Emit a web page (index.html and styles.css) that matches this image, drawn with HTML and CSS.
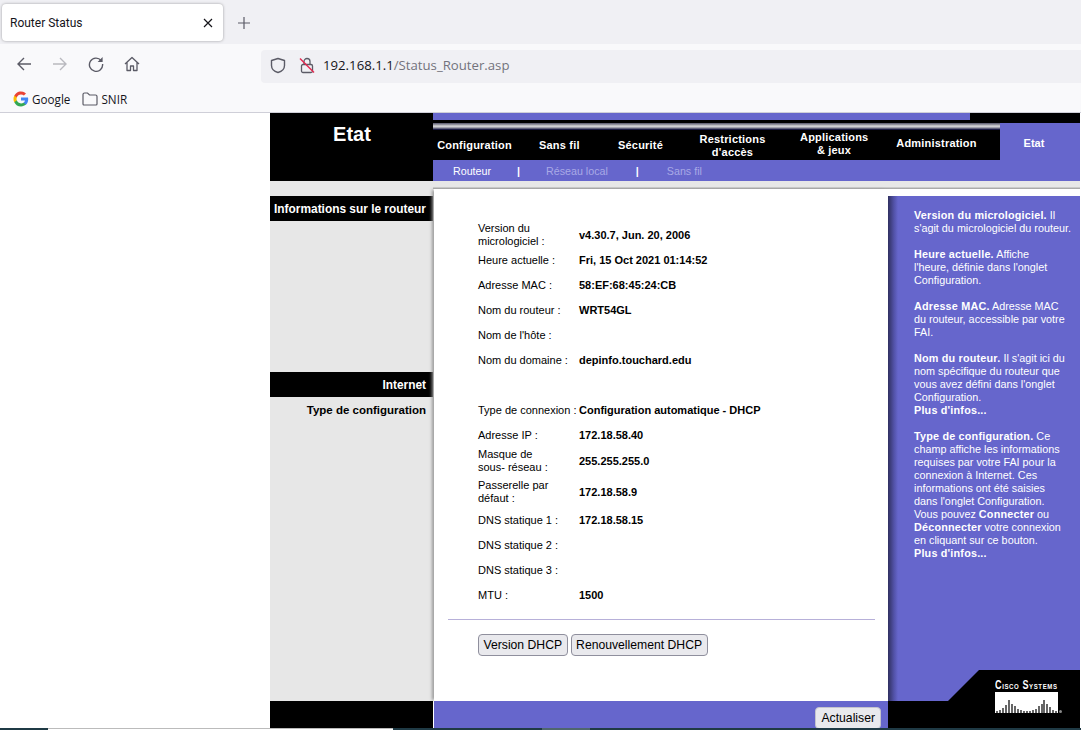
FILE: index.html
```html
<!DOCTYPE html>
<html lang="fr">
<head>
  <meta charset="UTF-8">
  <title>Router Status</title>
  <link rel="stylesheet" href="styles.css">
</head>
<body>

<!-- browser chrome -->
<div class="tabstrip">
  <div class="tab">
    <span class="tab-title">Router Status</span>
    <svg class="tab-close" width="10" height="10" viewBox="0 0 10 10"><path d="M1 1l8 8M9 1l-8 8" stroke="#15141a" stroke-width="1.2" fill="none"/></svg>
  </div>
  <svg class="tab-new" width="12" height="12" viewBox="0 0 12 12"><path d="M6 0v12M0 6h12" stroke="#5b5b66" stroke-width="1.2" fill="none"/></svg>
</div>

<div class="toolbar">
  <div class="nav-icons">
    <svg width="16" height="16" viewBox="0 0 16 16"><path d="M15 8H2M8 2L2 8l6 6" stroke="#5b5b66" stroke-width="1.4" fill="none"/></svg>
    <svg width="16" height="16" viewBox="0 0 16 16"><path d="M1 8h13M8 2l6 6-6 6" stroke="#b9b9bf" stroke-width="1.4" fill="none"/></svg>
    <svg width="16" height="16" viewBox="0 0 16 16"><path d="M13.2 4.6A6.6 6.6 0 1 0 14.6 8" stroke="#5b5b66" stroke-width="1.4" fill="none"/><path d="M14.6 1v5h-5z" fill="#5b5b66"/></svg>
    <svg width="16" height="16" viewBox="0 0 16 16"><path d="M1 8l7-6.5L15 8M3 6.5V14.500h3.500V10h3v4.500H13V6.500" stroke="#5b5b66" stroke-width="1.3" fill="none" stroke-linejoin="round"/></svg>
  </div>
  <div class="urlbar">
    <svg width="16" height="17" viewBox="0 0 16 17"><path d="M8 1.500l6.500 2v5c0 3.500-3 6-6.500 7-3.500-1-6.500-3.500-6.500-7v-5z" stroke="#5b5b66" stroke-width="1.4" fill="none" stroke-linejoin="round"/></svg>
    <svg class="lock" width="16" height="17" viewBox="0 0 16 17"><path d="M5 7V4.500a3 3 0 0 1 6 0V7" stroke="#5b5b66" stroke-width="1.3" fill="none"/><rect x="2.500" y="7.500" width="11" height="8" rx="1.500" stroke="#5b5b66" stroke-width="1.3" fill="none"/><path d="M1 1.500l14 14" stroke="#e22850" stroke-width="1.4"/></svg>
    <span class="url"><span class="url-host">192.168.1.1</span>/Status_Router.asp</span>
  </div>
</div>

<div class="bookmarks">
  <span class="bookmark">
    <svg width="16" height="16" viewBox="0 0 16 16">
      <path d="M15.200 8.200c0-.6-.1-1.100-.2-1.600H8v3h4a3.400 3.400 0 0 1-1.500 2.200v1.900h2.400c1.400-1.300 2.300-3.200 2.300-5.500z" fill="#4285f4"/>
      <path d="M8 15.400c2 0 3.700-.7 4.900-1.800l-2.400-1.900c-.7.400-1.500.7-2.500.7-1.900 0-3.600-1.300-4.200-3.100H1.300v1.900A7.400 7.400 0 0 0 8 15.400z" fill="#34a853"/>
      <path d="M3.800 9.300a4.400 4.400 0 0 1 0-2.800V4.600H1.300a7.400 7.400 0 0 0 0 6.600z" fill="#fbbc05"/>
      <path d="M8 3.500c1.100 0 2.100.4 2.900 1.100L13 2.500A7.400 7.400 0 0 0 1.300 4.600l2.500 1.900C4.400 4.800 6.100 3.500 8 3.500z" fill="#ea4335"/>
    </svg>
    Google
  </span>
  <span class="bookmark">
    <svg width="16" height="16" viewBox="0 0 16 16"><path d="M1 13V3.500A1.500 1.500 0 0 1 2.500 2h3l2 2h6A1.500 1.500 0 0 1 15 5.500V13a1 1 0 0 1-1 1H2a1 1 0 0 1-1-1z" stroke="#5b5b66" stroke-width="1.200" fill="none"/></svg>
    SNIR
  </span>
</div>

<!-- router page -->
<div class="page">
  <div class="head-left">Etat</div>
  <div class="head-right">
    <div class="top-band"><div class="top-purple"></div></div>
    <div class="nav-row">
      <div class="nav">
        <div class="nav-rule"></div>
        <div class="nav-items">
          <span class="nav-item nav-config">Configuration</span>
          <span class="nav-item nav-wifi">Sans fil</span>
          <span class="nav-item nav-sec">Sécurité</span>
          <span class="nav-item nav-restr">Restrictions<br>d'accès</span>
          <span class="nav-item nav-apps">Applications<br>&amp; jeux</span>
          <span class="nav-item nav-admin">Administration</span>
        </div>
      </div>
      <div class="nav-active">Etat</div>
    </div>
    <div class="subnav">
      <span class="sub-link sub-current">Routeur</span>
      <span class="sub-sep">|</span>
      <span class="sub-link">Réseau local</span>
      <span class="sub-sep sub-sep-wide">|</span>
      <span class="sub-link">Sans fil</span>
    </div>
  </div>

  <div class="side">
    <div class="side-title">Informations sur le routeur</div>
    <div class="side-title side-internet">Internet</div>
    <div class="side-label">Type de configuration</div>
  </div>

  <div class="main">
    <div class="band"></div>
    <div class="main-inner">
      <div class="rows">
        <div class="row row-first"><span class="lbl">Version du micrologiciel :</span><b>v4.30.7, Jun. 20, 2006</b></div>
        <div class="row"><span class="lbl">Heure actuelle :</span><b>Fri, 15 Oct 2021 01:14:52</b></div>
        <div class="row"><span class="lbl">Adresse MAC :</span><b>58:EF:68:45:24:CB</b></div>
        <div class="row"><span class="lbl">Nom du routeur :</span><b>WRT54GL</b></div>
        <div class="row"><span class="lbl">Nom de l'hôte :</span></div>
        <div class="row"><span class="lbl">Nom du domaine :</span><b>depinfo.touchard.edu</b></div>
        <div class="row row-gap"><span class="lbl">Type de connexion :</span><b>Configuration automatique - DHCP</b></div>
        <div class="row"><span class="lbl">Adresse IP :</span><b>172.18.58.40</b></div>
        <div class="row row-mask"><span class="lbl">Masque de<br>sous- réseau :</span><b>255.255.255.0</b></div>
        <div class="row row-gw"><span class="lbl">Passerelle par défaut :</span><b>172.18.58.9</b></div>
        <div class="row row-dns"><span class="lbl">DNS statique 1 :</span><b>172.18.58.15</b></div>
        <div class="row"><span class="lbl">DNS statique 2 :</span></div>
        <div class="row"><span class="lbl">DNS statique 3 :</span></div>
        <div class="row"><span class="lbl">MTU :</span><b>1500</b></div>
      </div>
      <div class="rule"></div>
      <div class="actions">
        <button class="btn">Version DHCP</button>
        <button class="btn">Renouvellement DHCP</button>
      </div>
    </div>
  </div>

  <div class="help">
    <div class="band"></div>
    <div class="help-text">
      <p><b>Version du micrologiciel.</b> Il<br>s'agit du micrologiciel du routeur.</p>
      <p><b>Heure actuelle.</b> Affiche<br>l'heure, définie dans l'onglet<br>Configuration.</p>
      <p><b>Adresse MAC.</b> Adresse MAC<br>du routeur, accessible par votre<br>FAI.</p>
      <p><b>Nom du routeur.</b> Il s'agit ici du<br>nom spécifique du routeur que<br>vous avez défini dans l'onglet<br>Configuration.<br><b>Plus d'infos...</b></p>
      <p><b>Type de configuration.</b> Ce<br>champ affiche les informations<br>requises par votre FAI pour la<br>connexion à Internet. Ces<br>informations ont été saisies<br>dans l'onglet Configuration.<br>Vous pouvez <b>Connecter</b> ou<br><b>Déconnecter</b> votre connexion<br>en cliquant sur ce bouton.<br><b>Plus d'infos...</b></p>
    </div>
  </div>

  <div class="foot-left"></div>
  <div class="foot-main"><button class="btn btn-foot">Actualiser</button></div>
  <div class="foot-right"></div>

  <div class="logo">
    <svg class="logo-notch" width="132" height="31" viewBox="0 0 132 31"><path d="M0 31L31 0h101v31z" fill="#000"/></svg>
    <div class="logo-word">Cisco Systems</div>
    <svg class="logo-bars" width="68" height="22" viewBox="0 0 68 22">
      <rect width="63" height="21" fill="#fff"/>
      <path d="M2 21v-2M5 21v-3M8 21v-5M11 21v-8M14 21v-13M17 21v-9M20 21v-7M23 21v-4M26 21v-3M29 21v-2M32 21v-2M35 21v-2M38 21v-3M41 21v-4M44 21v-7M47 21v-9M49 21v-13M52 21v-9M55 21v-6M58 21v-3M61 21v-2" stroke="#000" stroke-width="1.200"/>
      <circle cx="65.500" cy="19.500" r="1.500" fill="#888"/>
    </svg>
  </div>
</div>

<div class="taskbar"><span class="task-dark task-start"></span><span class="task-light"></span><span class="task-dark task-mid"></span><span class="task-hi"></span><span class="task-dark task-end"></span></div>

</body>
</html>
```

FILE: styles.css
```css
html, body { margin: 0; padding: 0; height: 730px; overflow: hidden; background: #fff; }
body { font-family: "Liberation Sans", Arial, sans-serif; font-size: 11px; color: #000; }

/* browser chrome */
.tabstrip {
  height: 44px; background: #f0f0f4; display: flex; align-items: flex-start;
}
.tab {
  width: 221px; height: 37px; margin: 4px 0 0 2px; padding: 0 8px; box-sizing: border-box;
  background: #fff; border-radius: 4px; box-shadow: 0 0 3px rgba(0,0,0,.35);
  display: flex; align-items: center; justify-content: space-between;
  font-family: Roboto, sans-serif; font-size: 12px; color: #15141a;
}
.tab-close { margin-right: 2px; }
.tab-new { margin: 17px 0 0 15px; }
.toolbar { height: 40px; background: #f9f9fb; display: flex; align-items: flex-start; }
.nav-icons { display: flex; gap: 20px; margin: 12px 0 0 16px; width: 245px; }
.urlbar {
  flex: 1; height: 33px; margin-top: 6px; padding: 0 0 3px 9px; box-sizing: border-box;
  background: #f0f0f4; border-radius: 4px 0 0 4px; display: flex; align-items: center;
}
.lock { margin-left: 13px; }
.url { margin-left: 8px; font-family: "Open Sans", sans-serif; font-size: 13.200px; color: #73737c; }
.url-host { color: #15141a; }
.bookmarks {
  height: 29px; background: #f9f9fb; display: flex; align-items: center; gap: 12px; padding: 1px 0 0 13px;
  box-sizing: border-box; border-bottom: 1px solid #cfcfd8;
  font-family: "Open Sans", sans-serif; font-size: 11.700px; color: #15141a;
}
.bookmark { display: flex; align-items: center; gap: 3px; }

/* router page */
.page {
  position: relative; width: 810px; height: 615px; margin-left: 270px; overflow: hidden;
  display: grid; grid-template-columns: 163px 455px 192px; grid-template-rows: 68px 520px 27px;
}
.head-left {
  background: #000; color: #fff; font-size: 20px; font-weight: bold; text-align: center;
  padding: 11px 0 0 1px; box-sizing: border-box; line-height: 21px;
}
.head-right { grid-column: 2 / 4; display: flex; flex-direction: column; background: #000; }
.top-band { height: 7px; background: #000; }
.top-purple { width: 537px; height: 7px; background: #6666cc; }
.nav-row { display: flex; height: 37px; margin-top: 3px; }
.nav { width: 567px; background: #000; }
.nav-rule {
  height: 7px;
  background: linear-gradient(#55556a, #a8a8b0 30%, #e0e0e0 45%, #9090a0 70%, #20204a 90%, #0a0a30);
}
.nav-items { height: 30px; display: flex; align-items: center; }
.nav-item {
  color: #fff; font-weight: bold; font-size: 11px; text-align: center; line-height: 13px;
  letter-spacing: .2px; white-space: nowrap;
}
.nav-config { margin-left: 4px; width: 75px; }
.nav-wifi { margin-left: 27px; width: 39px; }
.nav-sec { margin-left: 40px; width: 45px; }
.nav-restr { margin-left: 36px; width: 67px; padding-top: 2px; }
.nav-apps { margin-left: 34px; width: 68px; margin-top: -3px; }
.nav-admin { margin-left: 27px; width: 83px; padding-bottom: 4px; }
.nav-active {
  flex: 1; padding: 14px 12px 0 0; box-sizing: border-box; text-align: center;
  background: #6666cc; color: #fff; font-weight: bold;
}
.subnav {
  height: 21px; background: #6666cc; display: flex; align-items: center;
  padding-left: 20px; color: #fff; font-size: 10.700px; box-sizing: border-box;
}
.sub-link { color: #a9a9e6; }
.sub-current { color: #fff; }
.sub-sep { color: #fff; font-weight: bold; margin: 0 26px; }
.sub-sep-wide { margin: 0 28px; }

.side { background: #e7e7e7; padding-top: 15px; text-align: right; }
.side-title {
  height: 24px; line-height: 25px; padding: 1px 7px 0 0; background: #000; color: #fff;
  font-weight: bold; font-size: 11.900px; margin-bottom: 151px; white-space: nowrap;
}
.side-internet { margin-bottom: 0; }
.side-label { font-weight: bold; font-size: 11.500px; padding: 7px 7px 0 0; }

.band { height: 8px; flex: none; background: linear-gradient(#e7e7e7 70%, #9a9a9a); }
.main { background: #fff; display: flex; flex-direction: column; }
.main-inner {
  flex: 1; margin-left: 1px; padding: 33px 0 0 44px;
  box-shadow: -3px 0 3px -1px #999;
}
.rows { margin-bottom: 11px; }
.row { display: flex; align-items: center; height: 25px; line-height: 13px; }
.lbl { width: 101px; flex: none; }
.row-first { height: 26px; }
.row-gap { margin-top: 25px; }
.row-mask { height: 26px; }
.row-gw { height: 26px; margin-top: 5px; }
.row-dns { margin-top: 3px; }
.rule { height: 1px; background: #b7b0d9; margin: 0 13px 0 -30px; }
.actions { display: flex; gap: 3px; margin-top: 14px; }
.btn {
  height: 22px; padding: 0 4.500px; box-sizing: border-box; background: #e9e9ed; color: #000;
  border: 1px solid #8f8f9d; border-radius: 4px;
  font-family: "Liberation Sans", sans-serif; font-size: 12.200px; white-space: nowrap;
}

.help { display: flex; flex-direction: column; background: #fff; }
.help-text {
  flex: 1; margin-top: 7px; padding: 13px 0 0 26px; color: #fff; font-size: 10.800px; line-height: 13px;
  white-space: nowrap; background: linear-gradient(90deg, #303060, #5252a8 6px, #6666cc 10px);
}
.help-text p { margin: 0 0 13px; }
.help-text b { letter-spacing: .2px; }

.foot-left, .foot-right { background: #000; }
.foot-main { background: #6666cc; margin-left: 1px; text-align: right; padding: 6px 7px 0 0; box-sizing: border-box; overflow: hidden; }
.btn-foot { border-color: #c4c4cc; padding: 0 5px; }

.logo { position: absolute; right: 0; bottom: 0; width: 132px; height: 59px; }
.logo-notch { position: absolute; left: 0; top: 1px; }
.logo-word {
  position: absolute; left: 47px; top: 9px; color: #fff; font-size: 12px; font-weight: bold;
  font-variant: small-caps; white-space: nowrap; transform: scaleX(.755); transform-origin: left;
  letter-spacing: .8px;
}
.logo-bars { position: absolute; left: 47px; top: 23px; }

.taskbar { display: flex; height: 2px; }
.task-dark { background: #1f3a45; }
.task-start { width: 48px; }
.task-light { width: 345px; height: 1px; background: #fff; border-top: 1px solid #bbb; }
.task-mid { width: 149px; }
.task-hi { width: 48px; background: #4f666d; }
.task-end { flex: 1; }
```
